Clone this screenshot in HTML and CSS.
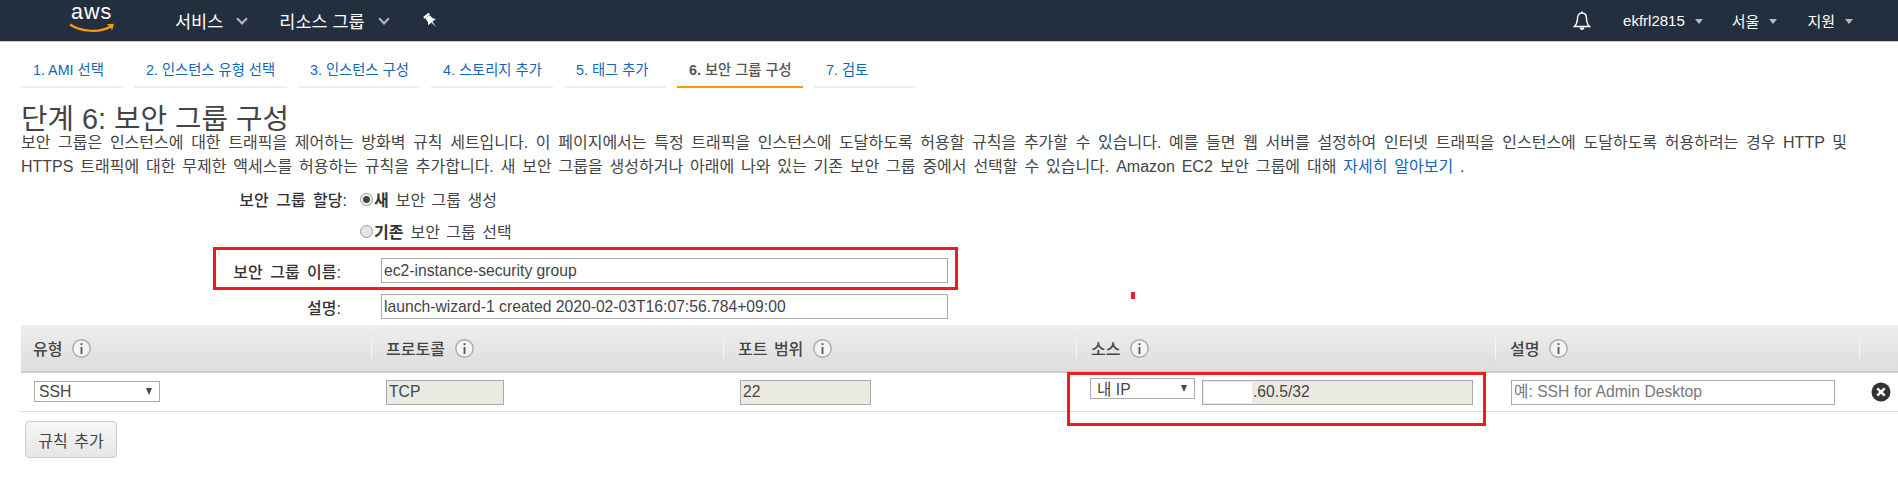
FILE: index.html
```html
<!DOCTYPE html>
<html lang="ko">
<head>
  <meta charset="UTF-8">
  <title>인스턴스 시작 - 보안 그룹 구성</title>
  <link rel="stylesheet" href="styles.css">
</head>
<body>

<svg class="defs" width="0" height="0">
  <symbol id="info" viewBox="0 0 19 19">
    <circle cx="9.5" cy="9.5" r="8.7" fill="#f4f4f4" stroke="#aaa" stroke-width="1.4"/>
    <rect x="8.6" y="8" width="1.8" height="7" fill="#555"/>
    <rect x="8.6" y="4.2" width="1.8" height="2" fill="#555"/>
  </symbol>
</svg>

<!-- ========= TOP NAV ========= -->
<nav class="topnav">
  <div class="logo">
    <span class="logo-text">aws</span>
    <svg class="logo-smile" width="46" height="10" viewBox="0 0 46 10">
      <path d="M1 1.5C12 9 31 10 42 3.5" fill="none" stroke="#f90" stroke-width="2.2"/>
      <path d="M37.5 1.2L45 .8 43 7.6C42.6 5 40.500 2.600 37.500 1.200Z" fill="#f90"/>
    </svg>
  </div>
  <a class="nav-main nav-services">서비스<i class="chev"></i></a>
  <a class="nav-main nav-groups">리소스 그룹<i class="chev"></i></a>
  <svg class="pin" width="16" height="16" viewBox="0 0 16 16">
    <g transform="rotate(-40 8 8)" fill="#fff">
      <path d="M4.500 0h7v2.200h-7z"/>
      <path d="M5.500 2.200h5l.5 4.800 2 2.500H3l2-2.500z"/>
      <path d="M7.300 9.500h1.400L8 16z"/>
    </g>
  </svg>

  <div class="nav-right">
    <svg class="bell" width="18" height="20" viewBox="0 0 18 20">
      <path d="M9 2C5.800 2 4.500 4.500 4.500 7.500c0 4-1 6-3 8h15c-2-2-3-4-3-8C13.500 4.500 12.200 2 9 2Z" fill="none" stroke="#fff" stroke-width="1.400"/>
      <path d="M9 .5v1.500" stroke="#fff" stroke-width="1.600"/>
      <path d="M6.500 16.500a2.500 2.500 0 0 0 5 0Z" fill="#fff"/>
    </svg>
    <a class="nav-sub nav-user">ekfrl2815<i class="caret"></i></a>
    <a class="nav-sub nav-region">서울<i class="caret"></i></a>
    <a class="nav-sub">지원<i class="caret"></i></a>
  </div>
</nav>

<!-- ========= WIZARD TABS ========= -->
<ul class="tabs">
  <li class="tab tab-s">1. AMI 선택</li>
  <li class="tab tab-l">2. 인스턴스 유형 선택</li>
  <li class="tab tab-m">3. 인스턴스 구성</li>
  <li class="tab tab-m">4. 스토리지 추가</li>
  <li class="tab tab-s">5. 태그 추가</li>
  <li class="tab tab-active"><b>6.</b> 보안 그룹 구성</li>
  <li class="tab tab-s">7. 검토</li>
</ul>

<main>
  <h1>단계 6: 보안 그룹 구성</h1>
  <p class="intro">보안 그룹은 인스턴스에 대한 트래픽을 제어하는 방화벽 규칙 세트입니다. 이 페이지에서는 특정 트래픽을 인스턴스에 도달하도록 허용할 규칙을 추가할 수 있습니다. 예를 들면 웹 서버를 설정하여 인터넷 트래픽을 인스턴스에 도달하도록 허용하려는 경우 HTTP 및<br><span class="intro-tight">HTTPS 트래픽에 대한 무제한 액세스를 허용하는 규칙을 추가합니다. 새 보안 그룹을 생성하거나 아래에 나와 있는 기존 보안 그룹 중에서 선택할 수 있습니다. Amazon EC2 보안 그룹에 대해 <a href="#">자세히 알아보기</a> .</span></p>

  <div class="form-row radio-row">
    <span class="radio-label">보안 그룹 할당:</span>
    <label><input type="radio" name="sg" checked><b>새</b> 보안 그룹 생성</label>
  </div>
  <div class="form-row radio-row">
    <span class="radio-label"></span>
    <label><input type="radio" name="sg"><b>기존</b> 보안 그룹 선택</label>
  </div>
  <div class="form-row name-row">
    <span class="field-label">보안 그룹 이름:</span>
    <input class="text-input wide" type="text" value="ec2-instance-security group">
  </div>
  <div class="form-row desc-row">
    <span class="field-label">설명:</span>
    <input class="text-input wide" type="text" value="launch-wizard-1 created 2020-02-03T16:07:56.784+09:00">
  </div>

  <!-- ========= RULES ========= -->
  <table class="rules">
    <colgroup>
      <col class="col-type"><col class="col-proto"><col class="col-port"><col class="col-source"><col class="col-desc"><col>
    </colgroup>
    <thead>
      <tr>
        <th><div class="th-in first">유형<svg class="info"><use href="#info"/></svg></div></th>
        <th><div class="th-in">프로토콜<svg class="info"><use href="#info"/></svg></div></th>
        <th><div class="th-in">포트 범위<svg class="info"><use href="#info"/></svg></div></th>
        <th><div class="th-in">소스<svg class="info"><use href="#info"/></svg></div></th>
        <th><div class="th-in">설명<svg class="info"><use href="#info"/></svg></div></th>
        <th><div class="th-in"></div></th>
      </tr>
    </thead>
    <tbody>
      <tr>
        <td>
          <div class="select select-type"><span>SSH</span><i class="arrow"></i></div>
        </td>
        <td><input class="text-input locked proto" type="text" value="TCP" readonly></td>
        <td><input class="text-input locked port" type="text" value="22" readonly></td>
        <td>
          <div class="source">
            <div class="select select-source"><span>내 IP</span><i class="arrow"></i></div>
            <div class="ip-wrap">
              <input class="text-input locked ip" type="text" value=".60.5/32" readonly>
              <span class="ip-erase"></span>
            </div>
          </div>
        </td>
        <td><input class="text-input desc" type="text" placeholder="예: SSH for Admin Desktop"></td>
        <td>
          <svg class="remove" width="20" height="20" viewBox="0 0 20 20">
            <circle cx="10" cy="10" r="9.500" fill="#333"/>
            <path d="M6.300 6.300l7.400 7.400M13.700 6.300l-7.400 7.400" stroke="#fff" stroke-width="2.600"/>
          </svg>
        </td>
      </tr>
    </tbody>
  </table>

  <button class="add-rule" type="button">규칙 추가</button>
</main>

<!-- red marks drawn over the screenshot -->
<div class="mark mark-name"></div>
<div class="mark mark-source"></div>
<div class="mark-dot"></div>

</body>
</html>
```

FILE: styles.css
```css
/* ---------- Overall ---------- */
html, body { margin: 0; padding: 0; background: #fff; overflow: hidden; }
body {
  position: relative;
  height: 485px;
  color: #444;
  font-family: "Liberation Sans", "Noto Sans CJK KR", sans-serif;
  font-size: 16px;
  word-spacing: 3px;
}
a { color: #0a6ebd; text-decoration: none; }
.defs { position: absolute; }

/* ---------- Top nav ---------- */
.topnav {
  display: flex;
  align-items: center;
  height: 41px;
  background: #232f3e;
  border-bottom: 1px solid #ccc;
  color: #fff;
  word-spacing: 0;
}
.logo { position: relative; width: 46px; height: 41px; margin-left: 69px; }
.logo-text {
  display: block;
  padding-left: 2px;
  font-size: 21.500px;
  line-height: 24px;
  letter-spacing: 1px;
}
.logo-smile { position: absolute; left: 0; top: 23px; }
.nav-main { display: flex; align-items: center; color: #fff; font-size: 17.500px; }
.nav-services { margin-left: 60px; }
.nav-groups { margin-left: 33px; }
.chev {
  width: 6px; height: 6px;
  margin: -3px 0 0 15px;
  border-right: 2px solid #bbb;
  border-bottom: 2px solid #bbb;
  transform: rotate(45deg);
}
.pin { margin-left: 35px; }

.nav-right { display: flex; align-items: center; margin-left: auto; margin-right: 45px; }
.bell { margin-right: 32px; }
.nav-sub { display: flex; align-items: center; color: #fff; font-size: 15px; }
.nav-user { margin-right: 29px; }
.nav-region { margin-right: 30px; }
.caret {
  margin: 1px 0 0 10px;
  border-top: 5px solid #bbb;
  border-left: 4px solid transparent;
  border-right: 4px solid transparent;
}

/* ---------- Tabs ---------- */
.tabs { display: flex; gap: 11px; list-style: none; margin: 18px 0 0 21px; padding: 0; word-spacing: 0; }
.tab {
  padding: 0 0 6px 12px;
  border-bottom: 2px solid #eee;
  color: #1166bb;
  font-size: 14.300px;
  line-height: 20px;
}
.tab-s { width: 90px; }
.tab-m { width: 110px; }
.tab-l { width: 141px; }
.tab-active { width: 114px; color: #555; border-bottom-color: #f90; font-weight: 500; }

/* ---------- Heading & intro ---------- */
main { padding-left: 21px; }
h1 { margin: 17px 0 0; font-size: 28.800px; line-height: 28px; font-weight: normal; color: #444; word-spacing: 0; }
.intro { margin: -2px 0 0; line-height: 24px; white-space: nowrap; word-spacing: 3.200px; }
.intro-tight { word-spacing: 2.400px; }
.intro a { color: #1166bb; }

/* ---------- Form ---------- */
.form-row { display: flex; align-items: center; }
.radio-row { height: 24px; margin-top: 8px; }
.radio-label { width: 326px; text-align: right; font-weight: 500; color: #333; }
.radio-row label { display: flex; align-items: center; margin-left: 13px; word-spacing: 2px; }
.radio-row input {
  appearance: none;
  width: 13px; height: 13px;
  margin: 0 1px 0 0;
  border: 1px solid #999;
  border-radius: 50%;
  background: #e4e4e4;
}
.radio-row input:checked { background: radial-gradient(circle, #444 0 3px, #eee 4px); }
.radio-row b { margin-right: 7px; color: #333; }

.name-row { margin-top: 15px; }
.desc-row { margin-top: 11px; }
.field-label { width: 320px; text-align: right; font-weight: 500; color: #333; }
.text-input {
  box-sizing: border-box;
  height: 25px;
  padding: 0 2px;
  border: 1px solid #aaa;
  border-radius: 0;
  outline: none;
  background: #fff;
  color: #444;
  font-family: inherit;
  font-size: 15.700px;
}
.text-input::placeholder { color: #777; }
.wide { width: 567px; margin-left: 40px; }
.locked { background: #eaeae2; }

/* ---------- Rules table ---------- */
.rules {
  table-layout: fixed;
  width: 1877px;
  margin-top: 6px;
  border-collapse: collapse;
}
.col-type { width: 350px; }
.col-proto { width: 352px; }
.col-port { width: 353px; }
.col-source { width: 419px; }
.col-desc { width: 364px; }
.rules th {
  height: 46px;
  padding: 0;
  background: linear-gradient(#eee, #ddd);
  border-bottom: 2px solid #ccc;
  text-align: left;
  font-size: 16px;
  font-weight: 500;
  word-spacing: 2px;
  color: #444;
}
.rules th:first-child .th-in { border-left: 0; padding-left: 12px; }
.th-in {
  display: flex;
  align-items: center;
  gap: 10px;
  height: 21px;
  padding-left: 14px;
  border-left: 1px solid #f5f5f5;
}
.info { width: 19px; height: 19px; }
.rules td {
  height: 38px;
  padding: 0 0 0 14px;
  border-bottom: 1px solid #ddd;
}
.rules td:first-child { padding-left: 13px; }
.rules td:nth-child(2) { padding-left: 15px; }
.rules td:nth-child(3) { padding-left: 17px; }
.rules td:nth-child(5) { padding-left: 16px; }
.rules td:last-child { padding-left: 12px; }

.select {
  box-sizing: border-box;
  display: flex;
  align-items: center;
  justify-content: space-between;
  height: 21px;
  padding: 0 7px 0 4px;
  border: 1px solid #aaa;
  background: #fff;
  color: #444;
  font-size: 15.700px;
  word-spacing: 0;
}
.select-type { width: 126px; margin-top: -1px; }
.select-source { width: 105px; margin-top: -2px; padding-left: 6px; }
.arrow {
  border-top: 7px solid #444;
  border-left: 3.500px solid transparent;
  border-right: 3.500px solid transparent;
}
.proto { width: 118px; }
.port { width: 131px; }
.source { display: flex; align-items: flex-start; gap: 7px; }
.ip-wrap { position: relative; display: flex; }
.ip { width: 271px; padding-left: 50px; }
.ip-erase { position: absolute; left: 2px; top: 2px; width: 48px; height: 21px; background: #fff; }
.desc { width: 324px; }
.remove { display: block; }

.add-rule {
  display: block;
  box-sizing: border-box;
  width: 92px;
  height: 37px;
  margin: 9px 0 0 4px;
  border: 1px solid #ccc;
  border-radius: 4px;
  background: linear-gradient(#f6f6f6, #e6e6e6);
  color: #444;
  font-family: inherit;
  font-size: 16px;
  word-spacing: 2px;
}

/* ---------- Red annotation marks ---------- */
.mark { position: absolute; box-sizing: border-box; border: 3px solid #ed1c24; }
.mark-name { left: 213px; top: 247px; width: 745px; height: 43px; }
.mark-source { left: 1067px; top: 372px; width: 419px; height: 54px; }
.mark-dot { position: absolute; left: 1131px; top: 292px; width: 4px; height: 7px; background: #ed1c24; }
```
